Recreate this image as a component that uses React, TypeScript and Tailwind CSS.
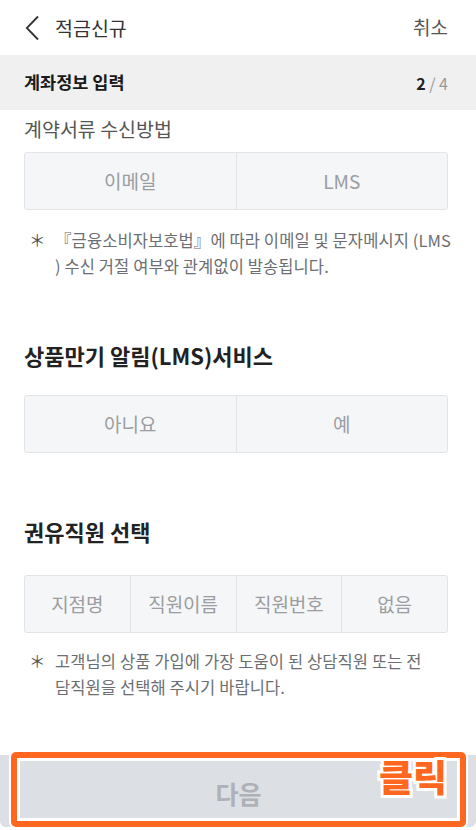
import React from "react";

const font = "font-['Noto_Sans_CJK_KR','Noto_Sans',sans-serif]";

function Toggle({ items }: { items: string[] }) {
  return (
    <div className="flex h-[58px] rounded-[3px] border border-[#e2e4e7] bg-[#f5f6f8]">
      {items.map((t, i) => (
        <div
          key={t}
          className={`flex flex-1 items-center justify-center text-[19px] text-[#9a9da1] ${
            i > 0 ? "border-l border-[#e2e4e7]" : ""
          }`}
        >
          {t}
        </div>
      ))}
    </div>
  );
}

// the app breaks note lines mid-word, so lines are given as-is
function Note({ lines }: { lines: string[] }) {
  return (
    <div className="flex pl-[5px] text-[16.5px] leading-[26px] tracking-[0.1px] text-[#6b6e72]">
      <span className="w-[26px] shrink-0 text-[#555]">＊</span>
      <p className="whitespace-nowrap">
        {lines.map((l, i) => (
          <span key={i} className="block">{l}</span>
        ))}
      </p>
    </div>
  );
}

export default function App() {
  return (
    <div className={`relative h-[830px] w-[476px] overflow-hidden bg-white ${font}`}>
      {/* top bar */}
      <header className="flex h-[55px] items-center justify-between pl-[25px] pr-[28px]">
        <div className="flex items-center gap-[15px]">
          <svg width="15" height="26" viewBox="0 0 15 26" fill="none">
            <path d="M13 1.5 L1.8 13 L13 24.5" stroke="#333" strokeWidth="1.8" />
          </svg>
          <span className="text-[19.5px] text-[#333]">적금신규</span>
        </div>
        <span className="text-[19px] text-[#555]">취소</span>
      </header>

      {/* step bar */}
      <div className="flex h-[55px] items-center justify-between bg-[#f0f0f0] pl-[24px] pr-[28px]">
        <span className="text-[17.5px] font-bold text-[#1a1a1a]">계좌정보 입력</span>
        <span className="text-[16px]">
          <b className="text-[#222]">2</b>
          <span className="text-[#999]"> / 4</span>
        </span>
      </div>

      <main className="pl-[24px] pr-[28px]">
        <p className="mt-[5px] text-[19.5px] leading-[27px] text-[#555]">계약서류 수신방법</p>
        <div className="mt-[10px]">
          <Toggle items={["이메일", "LMS"]} />
        </div>
        <div className="mt-[17px]">
          <Note
            lines={[
              "『금융소비자보호법』에 따라 이메일 및 문자메시지 (LMS",
              ") 수신 거절 여부와 관계없이 발송됩니다.",
            ]}
          />
        </div>

        <h2 className="mt-[61px] text-[22px] font-bold leading-[30px] text-[#222]">상품만기 알림(LMS)서비스</h2>
        <div className="mt-[25px]">
          <Toggle items={["아니요", "예"]} />
        </div>

        <h2 className="mt-[63px] text-[22px] font-bold leading-[30px] text-[#222]">권유직원 선택</h2>
        <div className="mt-[29px]">
          <Toggle items={["지점명", "직원이름", "직원번호", "없음"]} />
        </div>
        <div className="mt-[15px]">
          <Note
            lines={[
              "고객님의 상품 가입에 가장 도움이 된 상담직원 또는 전",
              "담직원을 선택해 주시기 바랍니다.",
            ]}
          />
        </div>
      </main>

      {/* bottom button */}
      <div className="absolute bottom-[3px] left-0 right-0 h-[72px] rounded-b-[6px] bg-[#dcdfe3]" />

      {/* click annotation */}
      <div className="absolute left-[9px] top-[750px] h-[79px] w-[459px] rounded-[7px] bg-white p-[2px]">
        <div className="h-full w-full rounded-[5px] border-[6px] border-[#ff6720] bg-white p-[3px]">
          <div className="relative flex h-full items-center justify-center bg-[#dcdfe3] pt-[9px]">
            <span className="text-[25px] font-semibold text-[#aeb1b6]">다음</span>
            <span className="absolute right-[10px] top-[-7px] text-[37px] font-black leading-[44px] text-[#ff6720] [-webkit-text-stroke:6px_white] [paint-order:stroke_fill]">
              클릭
            </span>
          </div>
        </div>
      </div>
    </div>
  );
}
